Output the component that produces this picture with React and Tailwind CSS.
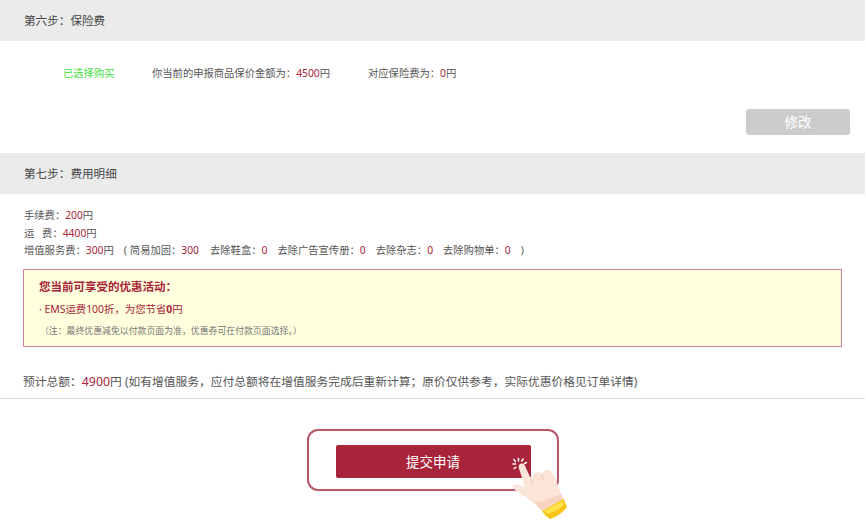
const font = { fontFamily: '"Noto Sans", "Noto Sans CJK SC", sans-serif' };

const Price = ({ children }) => <span className="text-[#a8243a]">{children}</span>;

const SectionHeader = ({ title }) => (
    <div className="h-[41px] bg-[#ebebeb] pl-6 flex items-center text-[11.6px] text-[#444]">{title}</div>
);

const HandPointer = () => (
    <svg className="absolute left-[196px] top-[23px]" width="65" height="65" viewBox="0 0 65 65">
        {/* click sparks */}
        <g stroke="#fff" strokeWidth="1.5" strokeLinecap="round">
            <path d="M13.5 4.5v2.5" />
            <path d="M9 5.5l1.3 2" />
            <path d="M18 5l-1.2 2" />
            <path d="M8 10h2.5" />
            <path d="M9 14.5l1.8-1.2" />
            <path d="M21.5 8.5l-2 1" />
        </g>
        {/* wrist band */}
        <path d="M37 57 L58 44 L62 53 Q55 62 45 65 Q40 62 37 57Z" fill="#f7c515" />
        <path d="M39 57 L57 47 L59 51 Q52 57 43 60Z" fill="#ffe24a" />
        {/* hand */}
        <path
            d="M13.5 13 Q14 9 17.5 9.5 Q20 10 21 14 L26 25 Q28 18 33 18 Q36 19 37 20 Q40 15 44 16 Q48 18 50 24 L58 45 L37 57 Q30 50 22 44 L10 36 Q7 33 9 31 Q12 29 17 32 L20 33 Z"
            fill="#fbe4d8"
        />
        <path d="M26 25 L27 31 M37 20 L38 26" stroke="#eec4b0" strokeWidth="0.8" fill="none" />
        <path d="M28 46 Q35 50 41 46 Q50 42 56 40 L58 45 L37 57 Q33 52 28 46Z" fill="#f6d3c1" />
    </svg>
);

export default function App() {
    return (
        <div className="w-[865px] h-[520px] bg-white overflow-hidden text-[#555]" style={font}>
            {/* step 6 */}
            <SectionHeader title="第六步：保险费" />
            <div className="h-[112px] pt-[23px] pr-[15px]">
                <div className="flex items-center h-[19px] pl-[63px] text-[10.3px] leading-[19px]">
                    <span className="w-[89px] text-[#46e03f]">已选择购买</span>
                    <span className="w-[216px]">你当前的申报商品保价金额为：<Price>4500</Price>円</span>
                    <span>对应保险费为：<Price>0</Price>円</span>
                </div>
                <div className="flex justify-end mt-[26px]">
                    <button className="w-[104px] h-[26px] bg-[#cccccc] rounded-[3px] text-white text-[13.5px]">修改</button>
                </div>
            </div>

            {/* step 7 */}
            <SectionHeader title="第七步：费用明细" />
            <div className="pt-[13px] pl-[24px] pr-[23px] text-[10.3px] leading-[17.5px]">
                <div>手续费：<Price>200</Price>円</div>
                <div>运&ensp;&nbsp;费：<Price>4400</Price>円</div>
                <div className="flex">
                    <span className="whitespace-pre">增值服务费：<Price>300</Price>円</span>
                    <span className="ml-[10px]">(</span>
                    <span className="ml-[3px]">简易加固：<Price>300</Price></span>
                    <span className="ml-[11px]">去除鞋盒：<Price>0</Price></span>
                    <span className="ml-[10px]">去除广告宣传册：<Price>0</Price></span>
                    <span className="ml-[10px]">去除杂志：<Price>0</Price></span>
                    <span className="ml-[10px]">去除购物单：<Price>0</Price></span>
                    <span className="ml-[10px]">)</span>
                </div>
                <div className="mt-[9px] -ml-[1px] h-[78px] border border-[#c9838f] bg-[#ffffdd] pl-[15px] pt-[8px]">
                    <div className="text-[11.5px] font-bold leading-[18px] text-[#a8243a]">您当前可享受的优惠活动：</div>
                    <div className="mt-[4px] text-[10.4px] leading-[18px] text-[#a8243a]">· EMS运费100折，为您节省<b>0</b>円</div>
                    <div className="mt-[5px] pl-[1px] text-[8.9px] leading-[16px] text-[#777]">（注：最终优惠减免以付款页面为准，优惠券可在付款页面选择。）</div>
                </div>
            </div>

            {/* total */}
            <div className="mt-[25px] h-[27px] pl-[23px] border-b border-[#dddddd] text-[11.75px] leading-[18px]">
                预计总额：<span className="text-[12.4px]"><Price>4900</Price></span>円 (如有增值服务，应付总额将在增值服务完成后重新计算；原价仅供参考，实际优惠价格见订单详情)
            </div>

            {/* submit */}
            <div className="flex justify-center pt-[30px] pl-[1px]">
                <div className="relative w-[252px] h-[62px] border-2 border-[#b9546a] rounded-[11px] flex items-center justify-center">
                    <button className="w-[195px] h-[33px] mt-[4px] pt-[2px] bg-[#a8243a] rounded-[2px] text-white text-[13.5px]">提交申请</button>
                    <HandPointer />
                </div>
            </div>
        </div>
    );
}
